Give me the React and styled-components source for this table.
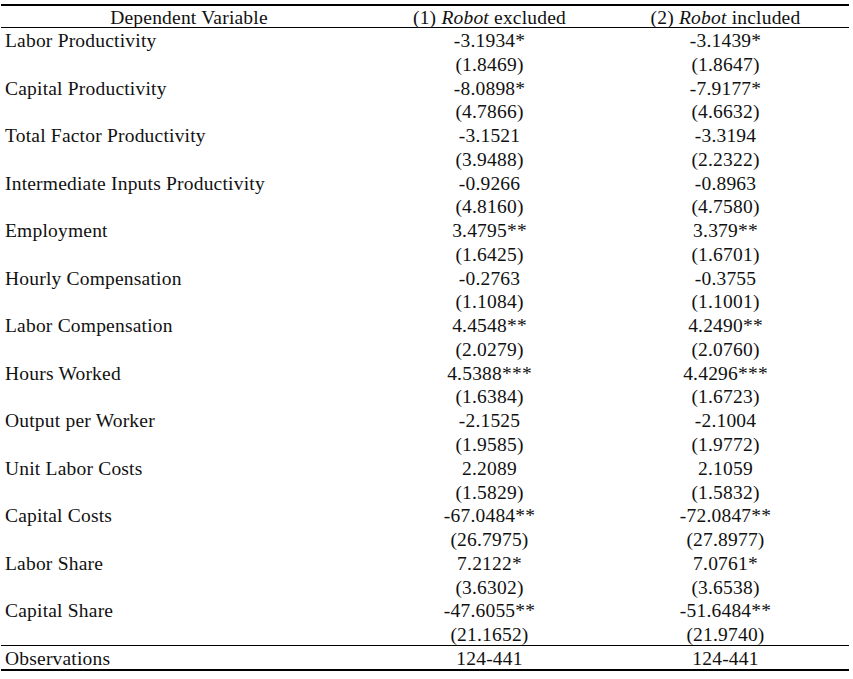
import React from 'react'
import styled, { createGlobalStyle } from 'styled-components'

const GlobalStyle = createGlobalStyle`
  html, body {
    margin: 0;
    padding: 0;
    background: #fff;
  }
  body {
    font-family: "Liberation Serif", "Times New Roman", serif;
    color: #111;
  }
`;

const Wrapper = styled.div`
  width: 848px;
  margin: 4px 0 0 1px;
`;

const Table = styled.div`
  display: grid;
  grid-template-columns: 376px 225px 247px;
  border-top: 2px solid #000;
  border-bottom: 2px solid #000;
  font-size: 19.5px;
  letter-spacing: 0.2px;
`;

const Cell = styled.div`
  height: ${p => p.$h || 23.77}px;
  line-height: ${p => (p.$h || 23.77) - (p.$pt ?? 3)}px;
  padding-top: ${p => p.$pt ?? 3}px;
  box-sizing: border-box;
  text-align: ${p => (p.$left ? 'left' : 'center')};
  padding-left: ${p => (p.$left ? '4px' : '0')};
  border-bottom: ${p => (p.$rule ? '1px solid #000' : 'none')};
  white-space: nowrap;
`;

const rows = [
  ['Labor Productivity', '-3.1934*', '(1.8469)', '-3.1439*', '(1.8647)'],
  ['Capital Productivity', '-8.0898*', '(4.7866)', '-7.9177*', '(4.6632)'],
  ['Total Factor Productivity', '-3.1521', '(3.9488)', '-3.3194', '(2.2322)'],
  ['Intermediate Inputs Productivity', '-0.9266', '(4.8160)', '-0.8963', '(4.7580)'],
  ['Employment', '3.4795**', '(1.6425)', '3.379**', '(1.6701)'],
  ['Hourly Compensation', '-0.2763', '(1.1084)', '-0.3755', '(1.1001)'],
  ['Labor Compensation', '4.4548**', '(2.0279)', '4.2490**', '(2.0760)'],
  ['Hours Worked', '4.5388***', '(1.6384)', '4.4296***', '(1.6723)'],
  ['Output per Worker', '-2.1525', '(1.9585)', '-2.1004', '(1.9772)'],
  ['Unit Labor Costs', '2.2089', '(1.5829)', '2.1059', '(1.5832)'],
  ['Capital Costs', '-67.0484**', '(26.7975)', '-72.0847**', '(27.8977)'],
  ['Labor Share', '7.2122*', '(3.6302)', '7.0761*', '(3.6538)'],
  ['Capital Share', '-47.6055**', '(21.1652)', '-51.6484**', '(21.9740)'],
];

function App() {
  return (
    <>
      <GlobalStyle />
      <Wrapper>
        <Table>
          <Cell $h={22} $pt={1} $rule>Dependent Variable</Cell>
          <Cell $h={22} $pt={1} $rule>(1) <i>Robot</i> excluded</Cell>
          <Cell $h={22} $pt={1} $rule>(2) <i>Robot</i> included</Cell>
          {rows.map((r, i) => {
            const last = i === rows.length - 1
            return (
              <React.Fragment key={r[0]}>
                <Cell $left>{r[0]}</Cell>
                <Cell>{r[1]}</Cell>
                <Cell>{r[3]}</Cell>
                <Cell $left $rule={last}></Cell>
                <Cell $rule={last}>{r[2]}</Cell>
                <Cell $rule={last}>{r[4]}</Cell>
              </React.Fragment>
            )
          })}
          <Cell $left $h={23}>Observations</Cell>
          <Cell $h={23}>124-441</Cell>
          <Cell $h={23}>124-441</Cell>
        </Table>
      </Wrapper>
    </>
  )
}

export default App
